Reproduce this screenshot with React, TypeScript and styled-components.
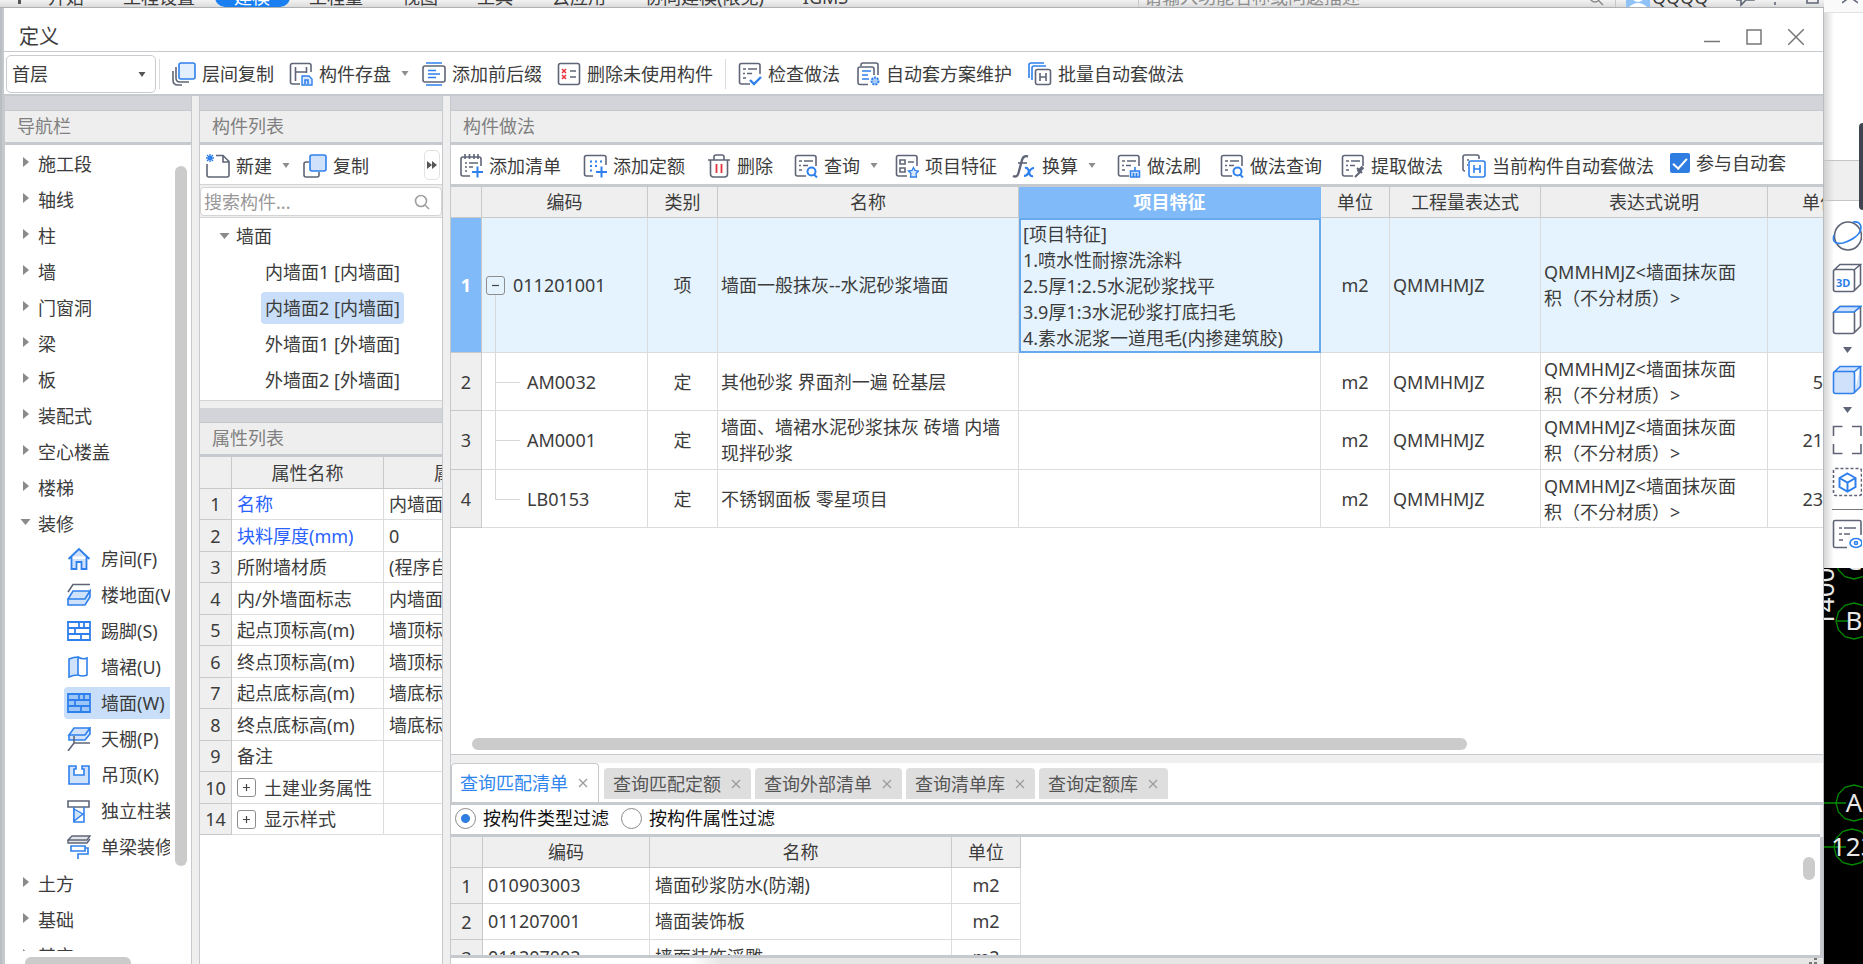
import React from "react";
import styled, { createGlobalStyle, css } from "styled-components";

const ink = "#3c3c3c";
const line = "#d4d4d4";
const strong = "#c6cace";
const gray = "#5f6577";
const blue = "#2f80ed";
const pale = "#cfe1fb";

const Global = createGlobalStyle`
  * { box-sizing: border-box; }
  body { margin: 0; overflow: hidden; background: #fff; }
  body, button, input, select, table {
    font: 18px/26px "Noto Sans", "Noto Sans CJK SC", sans-serif;
    color: ${ink};
  }
  button { border: 0; padding: 0; background: none; white-space: nowrap; }
  ul { list-style: none; margin: 0; padding: 0; }
`;

/* ---------- icons ---------- */

const g = { stroke: gray, strokeWidth: 1.6, fill: "none" };
const b = { stroke: blue, strokeWidth: 1.6, fill: "none" };
const sheet = <path {...g} d="M22 12V3.5Q22 1.5 20 1.5H3.500Q1.500 1.500 1.500 3.500V20Q1.500 22 3.500 22H12" />;
const rows = <path {...g} d="M5 7h3M10 7h9M5 11.500h2M9 11.500h5M5 16h3" />;

const icons: Record<string, React.ReactNode> = {
  layers: <>
    <path {...g} d="M4 5v11q0 4 4 4h9M1 9v9q0 5 5 5h4" />
    <rect x="7" y="1" width="16" height="16" rx="2" fill="#e4effd" stroke={blue} strokeWidth="1.6" />
  </>,
  save: <>
    <path {...g} d="M22 10V3.500Q22 1.500 20 1.500H3.500Q1.500 1.500 1.500 3.500V20Q1.500 22 3.500 22H11" />
    <path {...g} d="M6.500 5v14M6.500 10h11M17.500 5v6" />
    <path d="M13 14h7l3 3v6H13z" fill="#d9e8fd" stroke={blue} strokeWidth="1.4" />
    <path {...b} d="M16 22v-4h3v4" />
  </>,
  affix: <>
    <path {...b} d="M4 1h16M4 23h16" />
    <rect {...g} x="1" y="4" width="22" height="16" rx="2" />
    <path {...b} d="M6 8.500h8M6 12h12M6 15.500h8" />
  </>,
  unused: <>
    <rect {...g} x="1.500" y="1.500" width="21" height="21" rx="2" />
    <path stroke="#e5323c" strokeWidth="1.5" d="M5 7l4 4M9 7l-4 4M5 13l4 4M9 13l-4 4" />
    <path {...g} d="M13 9h6M13 15h6" />
  </>,
  check: <>{sheet}{rows}<path {...b} strokeWidth="2.4" d="M12 18l4 4 7-7" /></>,
  scheme: <>
    <path {...g} d="M5 4V3q0-2 2-2h13q2 0 2 2v10M12 22.500H4q-2 0-2-2V7q0-2 2-2h12q2 0 2 2v6" />
    <path {...b} d="M6 9h9M6 13h6M6 17h7" />
    <circle cx="19" cy="19" r="3.500" fill="#a9cbf8" stroke={blue} strokeWidth="2" strokeDasharray="2 1" />
  </>,
  batch: <>
    <path {...b} d="M1 16V3q0-2 2-2h13M4 18V6q0-2 2-2h12" />
    <rect {...g} x="7.500" y="7.500" width="15" height="15" rx="2" />
    <path {...g} d="M12 11v8M18 11v8M12 15h6" />
  </>,
  create: <>
    <path {...g} d="M10 1.500h7l6 6V21q0 2-2 2H3q-2 0-2-2V10M17 1.500V8h6" />
    <path stroke={blue} strokeWidth="1.4" d="M1 1l6 6M7 1L1 7M4 0v8M0 4h8" />
  </>,
  copy: <>
    <path {...g} d="M6 8H3q-2 0-2 2v11q0 2 2 2h11q2 0 2-2v-3" />
    <rect x="7" y="1" width="16" height="16" rx="2" fill={pale} stroke={blue} strokeWidth="1.6" />
  </>,
  addList: <>
    <path {...g} d="M22 12V5q0-2-2-2H4Q2 3 2 5v15q0 2 2 2h7M6 0v5M10.500 0v5M15 0v5M19 0v5M6 9h2M10 9h9M6 13h2M10 13h4M6 17h2" />
    <path {...b} strokeWidth="2" d="M13 18h11M18.500 12.500v11" />
  </>,
  addQuota: <>
    <path {...g} d="M23 11V3.500q0-2-2-2H3.500q-2 0-2 2V20q0 2 2 2H10" />
    <path stroke={blue} strokeWidth="2" strokeDasharray="2 3" d="M7 7.500h12M7 12h7M7 16.500h4" />
    <path {...b} strokeWidth="2" d="M13 18h11M18.500 12.500v11" />
  </>,
  trash: <>
    <path {...g} d="M1 6h22M7 6V3q0-2 2-2h6q2 0 2 2v3M3.500 6v14q0 3 3 3h11q3 0 3-3V6" />
    <path stroke="#e5323c" strokeWidth="1.8" d="M9.500 10v9M14.500 10v9" />
  </>,
  query: <>{sheet}{rows}<circle {...b} strokeWidth="2" cx="17.500" cy="17.500" r="4" /><path {...b} strokeWidth="2" d="M20 20.500l3 3" /></>,
  feature: <>
    {sheet}
    <path {...g} d="M5 6h5v4H5zM5 14h5v4H5zM13 8h6" />
    <path d="M18.500 13.500l1.500 3 3.500.5-2.500 2.500.5 3.500h-6l.5-3.500L13.500 17l3.500-.5z" fill="#d9e8fd" stroke={blue} strokeWidth="1.300" />
  </>,
  fx: <>
    <path d="M1 22q4 2 5.500-3L10 6q1.500-5 6-3.500" fill="none" stroke={gray} strokeWidth="2.4" />
    <path {...g} d="M6 9h9" />
    <path stroke={blue} strokeWidth="2.2" fill="none" d="M13 14q3-1 4 4t4 4M22 14q-3 0-5 4t-5 4" />
  </>,
  brush: <>{sheet}{rows}<path d="M13.500 17h9v6h-9z" fill={pale} stroke={blue} strokeWidth="1.5" /><path {...b} d="M18 13v4M16.500 19v4M19.500 19v4" /></>,
  extract: <>{sheet}{rows}<path stroke={gray} strokeWidth="3.500" d="M17 18l5-5" /><path stroke={gray} strokeWidth="2" d="M14 23l5-5M16 14l5 5" /></>,
  current: <>
    <path {...g} d="M17 5V3q0-2-2-2H3Q1 1 1 3v12q0 2 2 2M5 6h2M5 11h1" />
    <rect {...b} x="7" y="7" width="16" height="16" rx="2" />
    <path {...b} d="M12 11v8M18 11v8M12 15h6" />
  </>,
  house: <path d="M1.500 12L12 2l10.500 10M4.500 9.500V22h5v-7h5v7h5V9.500" fill={pale} stroke={blue} strokeWidth="1.8" />,
  floor: <>
    <path {...g} d="M1 9l5-7.500h17" />
    <path d="M1 16l5-8h17l-5 8zM1 16v6h17l5-8V8l-5 8z" fill={pale} stroke={blue} strokeWidth="1.600" />
  </>,
  brick: <path {...b} strokeWidth="1.8" d="M1 3h22v18H1zM1 9h22M1 15h22M12 3v6M17 3v6M8 9v6M14 15v6" />,
  brickOn: <><path d="M1 3h22v18H1z" fill="#9cc5f8" stroke={blue} strokeWidth="1.8" /><path {...b} strokeWidth="1.8" d="M1 9h22M1 15h22M12 3v6M17 3v6M8 9v6M14 15v6" /></>,
  dado: <>
    <path d="M2 4q5-2 9-2v18q-5 0-9 2z" fill={pale} stroke={blue} strokeWidth="1.6" />
    <path {...b} d="M11 2q5 3 9 1v17q-4 2-9 0" />
  </>,
  ceiling: <>
    <path d="M2 8l5-7h16l-5 7zM2 8v5h16l5-6V1l-5 7z" fill={pale} stroke={blue} strokeWidth="1.6" />
    <path {...g} d="M1 24l6-8h16M7 16V9" />
  </>,
  drop: <path d="M2 3h7v3H7v6h10V6h-2V3h7v18H2z" fill={pale} stroke={blue} strokeWidth="1.6" />,
  column: <>
    <path {...g} d="M1 2h21v6H1z" />
    <path {...b} d="M7 8v15h10V8" /><path d="M7 10l9 5-9 7z" fill={pale} stroke={blue} strokeWidth="1.4" />
  </>,
  beam: <>
    <path d="M1 5l4-4h18l-3 4zM1 5v3h19l3-4" fill="#e4e5ea" stroke={gray} strokeWidth="1.4" />
    <path {...b} d="M4 11h14v5H4zM18 13h3v6H11v5" />
  </>,
};

const Icon = ({ name }: { name: string }) => (
  <svg width="24" height="24" viewBox="0 0 24 24" aria-hidden="true">{icons[name]}</svg>
);

/* ---------- shell ---------- */

const Page = styled.div`
  display: flex;
  height: 100vh;
  overflow: hidden;
  background: #b9bec4;
`;
const Left = styled.div`
  flex: 1;
  min-width: 0;
  display: flex;
  flex-direction: column;
`;
const Ribbon = styled.div`
  flex: none;
  display: flex;
  align-items: flex-end;
  height: 8px;
  overflow: hidden;
  padding-left: 8px;
  background: linear-gradient(#f2f2f2, #dcdcdc);
  border-bottom: 1px solid #aeb0b2;
`;
const RibbonTab = styled.button<{ $on?: boolean }>`
  flex: none;
  height: 20px;
  padding: 0 20px 0 19px;
  line-height: 20px;
  ${(p) => p.$on && css`background: #1a7ff0; color: #fff; border-radius: 10px;`}
`;
const RibbonMark = styled.span`
  flex: none;
  width: 21px;
  height: 4px;
  margin-bottom: 3px;
  &::before { content: ""; display: block; width: 10px; height: 4px; border-right: 3px solid #555; }
`;
const RibbonSearch = styled.label`
  display: flex;
  align-items: flex-end;
  width: 478px;
  height: 20px;
  margin-left: auto;
  border-left: 1px solid #c8c8c8;
  border-right: 1px solid #c8c8c8;
  padding: 0 11px 0 5px;
  input { flex: 1; height: 20px; border: 0; padding: 0; background: none; line-height: 20px; }
  input::placeholder { color: #8f8f8f; opacity: 1; }
`;
const Account = styled.div`
  display: flex;
  align-items: flex-end;
  width: 208px;
  padding-left: 10px;
  span { padding: 0 26px 0 2px; line-height: 20px; }
  svg { flex: none; }
`;

const Window = styled.main`
  flex: 1;
  min-height: 0;
  display: flex;
  flex-direction: column;
  margin-left: 2px;
  border-left: 2px solid #c6c9cc;
  border-right: 1px solid #b8bcc0;
  background: #fff;
`;
const TitleBar = styled.header`
  flex: none;
  display: flex;
  align-items: center;
  height: 44px;
  padding: 14px 19px 0 15px;
  border-bottom: 1px solid ${strong};
  h1 { flex: 1; margin: 0; font-size: 20px; font-weight: 400; line-height: 28px; }
`;
const Controls = styled.div`
  display: flex;
  gap: 26px;
  button { display: block; height: 16px; }
  svg { display: block; }
`;
const TopBar = styled.div`
  flex: none;
  display: flex;
  align-items: center;
  height: 44px;
  padding: 1px 0 0 2px;
  border-bottom: 2px solid ${strong};
`;
const FloorSelect = styled.label`
  position: relative;
  flex: none;
  width: 150px;
  height: 38px;
  select {
    width: 100%;
    height: 100%;
    appearance: none;
    padding: 0 5px;
    border: 1px solid #c9cbce;
    border-radius: 5px;
    background: #fff;
  }
  svg { position: absolute; right: 8px; top: 16px; }
`;
const Rule = styled.span<{ $before?: number }>`
  flex: none;
  width: 1px;
  height: 30px;
  margin: 0 12px 0 ${(p) => p.$before ?? 12}px;
  background: #dcdcdc;
`;
const Group = styled.div<{ $gap: number; $loose?: boolean }>`
  flex: none;
  display: flex;
  align-items: center;
  gap: ${(p) => p.$gap}px;
  ${(p) => p.$loose && css`&& span + svg { margin-right: 0; }`}
`;
const Tool = styled.button`
  display: flex;
  align-items: center;
  height: 30px;
  line-height: 30px;
  svg { flex: none; }
  svg:first-child { margin-right: 6px; }
  span + svg { margin: 0 -4px 0 8px; }
`;
const Rest = styled.div`
  flex: none;
  display: flex;
  gap: 19px;
  margin-left: 21px;
`;
const Caret = ({ color = "#8d8d8d" }: { color?: string }) => (
  <svg width="12" height="8" viewBox="0 0 12 8" aria-hidden="true"><path d="M2.500 1h7L6 6z" fill={color} /></svg>
);
const ToolButton = ({ icon, label, menu }: { icon: string; label: string; menu?: boolean }) => (
  <Tool type="button"><Icon name={icon} /><span>{label}</span>{menu && <Caret />}</Tool>
);

const Work = styled.div`
  flex: 1;
  min-height: 0;
  display: grid;
  grid-template-columns: 188px 244px minmax(0, 1fr);
  column-gap: 7px;
  background: #efefef;
`;
const Column = styled.section`
  min-width: 0;
  min-height: 0;
  display: flex;
  flex-direction: column;
  border: solid ${strong};
  border-width: 0 1px;
`;
const PanelTitle = styled.h2`
  flex: none;
  margin: 0;
  height: 49px;
  padding-left: 12px;
  border-top: 14px solid #d2d4da;
  border-bottom: 3px solid ${strong};
  background: #eee;
  color: #808080;
  font-size: 18px;
  font-weight: 400;
  line-height: 32px;
  box-shadow: inset 0 1px #c4c8cc;
`;

/* ---------- navigation ---------- */

const NavBody = styled.div`
  flex: 1;
  min-height: 0;
  display: flex;
  padding-right: 4px;
  gap: 5px;
  overflow: hidden;
  background: #fff;
`;
const NavTree = styled.ul`
  flex: 1;
  min-width: 0;
  overflow: hidden;
`;
const NavGroup = styled.button`
  display: flex;
  align-items: center;
  height: 36px;
  padding: 2px 0 0 14px;
  gap: 5px;
  svg { margin-bottom: 4px; }
`;
const NavItem = styled.button<{ $on?: boolean }>`
  display: flex;
  align-items: center;
  width: 100%;
  height: 32px;
  padding-left: 3px;
  gap: 10px;
  border-radius: 4px 0 0 4px;
  background: ${(p) => (p.$on ? "#c9dff9" : "none")};
  overflow: hidden;
  svg { flex: none; }
`;
const NavLeaf = styled.li`
  display: flex;
  align-items: center;
  padding-left: 59px;
  height: 36px;
`;
const VTrack = styled.div<{ $top: number; $bottom: number }>`
  flex: none;
  display: flex;
  width: 12px;
  padding: ${(p) => p.$top}px 0 ${(p) => p.$bottom}px;
  &::before { content: ""; flex: 1; border-radius: 6px; background: #cbcbcb; }
`;
const NavFoot = styled.div`
  flex: none;
  height: 13px;
  padding: 6px 0 0 20px;
  overflow: hidden;
  background: #fff;
  &::before { content: ""; display: block; width: 106px; height: 12px; border-radius: 6px; background: #cbcbcb; }
`;
const Fold = ({ open }: { open?: boolean }) => (
  <svg width="14" height="12" viewBox="0 0 14 12" aria-hidden="true">
    <path d={open ? "M1.500 3h10L6.500 9z" : "M4 1l6 5-6 5z"} fill="#8a8a8a" />
  </svg>
);

/* ---------- component list ---------- */

const ListTools = styled.div`
  flex: none;
  display: flex;
  align-items: center;
  gap: 15px;
  height: 40px;
  padding: 3px 2px 0 6px;
  border-bottom: 1px solid ${line};
  background: #fff;
`;
const More = styled.button`
  width: 16px;
  height: 30px;
  margin: 0 0 2px auto;
  border: 1px solid #e2e2e2;
  border-radius: 5px;
  svg { display: block; margin: auto; }
`;
const Search = styled.label`
  flex: none;
  display: flex;
  align-items: center;
  height: 29px;
  margin: 2px 0 1px;
  padding: 0 11px 0 3px;
  border: 1px solid ${line};
  border-radius: 4px;
  background: #fff;
  input { flex: 1; min-width: 0; border: 0; padding: 0; background: none; outline: 0; }
  input::placeholder { color: #989898; opacity: 1; }
`;
const Tree = styled.ul`
  flex: none;
  height: 184px;
  margin-bottom: 7px;
  border: 1px solid ${line};
  border-width: 1px 0;
  background: #fff;
  li { display: flex; align-items: center; height: 36px; }
`;
const TreeRoot = styled.button`
  display: flex;
  align-items: center;
  gap: 4px;
  padding-left: 18px;
`;
const TreeItem = styled.button<{ $on?: boolean }>`
  height: 32px;
  margin-left: 61px;
  padding: 0 4px;
  line-height: 32px;
  border-radius: 4px;
  background: ${(p) => (p.$on ? "#c9dff9" : "none")};
`;

/* ---------- tables ---------- */

const Grid = styled.table`
  flex: none;
  width: 100%;
  table-layout: fixed;
  border-collapse: separate;
  border-spacing: 0;
  background: #fff;
  th { background: #efefef; font-weight: 400; padding: 0; border: solid #c9c9c9; border-width: 0 1px 1px 0; text-align: center; }
  td { padding: 0 6px 0 3px; border: solid #dcdcdc; border-width: 0 1px 1px 0; }
  th, td { overflow: hidden; }
`;
const PropGrid = styled(Grid)`
  white-space: nowrap;
  thead th { height: 32px; }
  tbody th, tbody td { height: 31px; line-height: 26px; }
  tbody tr:nth-child(even) > * { height: 32px; }
  td { padding: 0 0 0 5px; }
  tr > :last-child { border-right: 0; }
`;
const PropValueHead = styled.th`
  && { padding-left: 50px; text-align: left; }
`;
const PropName = styled.td<{ $accent?: boolean }>`
  color: ${(p) => (p.$accent ? "#2962ff" : ink)};
`;
const Blank = styled.div`
  flex: 1;
  min-height: 0;
  background: #fff;
`;
const Labelled = styled.span<{ $gap: number }>`
  display: flex;
  align-items: center;
  gap: ${(p) => p.$gap}px;
`;
const Toggle = styled.button`
  flex: none;
  display: flex;
  align-items: center;
  justify-content: center;
  width: 19px;
  height: 19px;
  border: 1px solid #8d8d8d;
  border-radius: 3px;
`;
const Sign = ({ plus }: { plus?: boolean }) => (
  <svg width="9" height="9" viewBox="0 0 9 9" aria-hidden="true">
    <path d={plus ? "M1 4.500h7M4.500 1v7" : "M1 4.500h7"} stroke="#444" strokeWidth="1.2" />
  </svg>
);

const Main = styled(Column)`
  border-right: 0;
`;
const MainTools = styled.div`
  flex: none;
  display: flex;
  align-items: center;
  height: 42px;
  padding: 3px 0 0 8px;
  border-bottom: 3px solid ${strong};
  background: #fff;
  overflow: hidden;
`;
const Join = styled.label`
  flex: none;
  display: flex;
  align-items: center;
  gap: 6px;
  margin: 0 0 6px 16px;
  input {
    appearance: none;
    width: 20px;
    height: 20px;
    margin: 0;
    border-radius: 2px;
    background: #2f7de1;
    display: grid;
    place-items: center;
  }
  input::before { content: ""; width: 6px; height: 12px; margin-bottom: 3px; border: solid #fff; border-width: 0 2px 2px 0; rotate: 42deg; }
`;
const BillGrid = styled(Grid)`
  thead th { height: 31px; }
  thead th:nth-child(5) { background: #80baf9; color: #fff; font-weight: 700; border-color: #80baf9; }
  thead th:last-child { padding-left: 34px; text-align: left; white-space: nowrap; }
  tr > :last-child { border-right: 0; padding-right: 0; }
`;
const BillRow = styled.tr<{ $on?: boolean }>`
  > * { height: ${(p) => (p.$on ? 135 : 58)}px; }
  &:nth-child(3) > * { height: 59px; }
  > td:nth-child(3), > td:nth-child(6) { text-align: center; padding: 0; }
  > td:nth-child(8) { padding-right: 14px; }
  > td:last-child { text-align: right; }
  ${(p) => p.$on && css`
    td { background: #e5f3fe; }
    th { background: #80baf9; color: #fff; font-weight: 700; }
    td:nth-child(5) { border: 2px solid #68a9ee; padding-left: 2px; white-space: pre-line; }
  `}
`;
const CodeCell = styled.td<{ $kind: "root" | "mid" | "last" }>`
  position: relative;
  &&& { padding-left: ${(p) => (p.$kind === "root" ? 4 : 45)}px; }
  &::before {
    content: "";
    position: absolute;
    left: 13px;
    top: ${(p) => (p.$kind === "root" ? "calc(50% + 10px)" : "0")};
    bottom: ${(p) => (p.$kind === "last" ? "50%" : "0")};
    border-left: 1px solid #d8d8d8;
  }
  &::after {
    content: "";
    position: absolute;
    left: 13px;
    top: 50%;
    width: ${(p) => (p.$kind === "root" ? 0 : 25)}px;
    border-top: 1px solid #d8d8d8;
  }
`;
const HTrack = styled.div`
  flex: none;
  height: 17px;
  padding: 0 356px 5px 21px;
  border-bottom: 1px solid ${strong};
  background: #fff;
  &::before { content: ""; display: block; height: 12px; border-radius: 6px; background: #cbcbcb; }
`;

/* ---------- lower query panel ---------- */

const Tabs = styled.div`
  flex: none;
  display: flex;
  align-items: flex-end;
  gap: 4px;
  height: 50px;
  padding-bottom: 3px;
  border-top: 8px solid #efefef;
  border-bottom: 3px solid ${strong};
  background: #fff;
`;
const Tab = styled.div<{ $on?: boolean }>`
  display: flex;
  align-items: center;
  gap: 9px;
  height: 31px;
  padding: 0 9px;
  border-radius: 4px 4px 0 0;
  background: #dedede;
  color: #555;
  button { line-height: 30px; color: inherit; }
  button + button { display: flex; }
  ${(p) => p.$on && css`
    height: 39px;
    margin: 0 1px -3px 0;
    padding: 0 9px 0 8px;
    border: 1px solid ${strong};
    border-bottom: 0;
    background: #fff;
    color: #2f86ee;
  `}
`;
const Filters = styled.fieldset`
  flex: none;
  display: flex;
  align-items: center;
  gap: 12px;
  height: 32px;
  margin: 0 3px 0 0;
  padding: 0 4px;
  border: 0;
  border-bottom: 3px solid ${strong};
  background: #fff;
  color: #111;
  label { display: flex; align-items: center; gap: 7px; }
  input {
    appearance: none;
    width: 21px;
    height: 21px;
    margin: 0;
    border: 1px solid #8a8a8a;
    border-radius: 50%;
    background: #fff;
  }
  input:checked { background: radial-gradient(circle, #2f7de1 4px, #fff 5px); }
`;
const Results = styled.div`
  flex: none;
  display: flex;
  justify-content: space-between;
  height: 121px;
  padding-right: 5px;
  border-right: 3px solid ${strong};
  border-bottom: 3px solid ${strong};
  overflow: hidden;
  background: #fff;
`;
const ResultGrid = styled(Grid)`
  width: 570px;
  height: 0;
  thead th { height: 31px; }
  tbody > tr > * { height: 36px; }
  tbody > tr > td { padding: 0 0 2px 5px; }
  tbody > tr > td:last-child { text-align: center; padding-left: 0; }
`;
const Status = styled.footer`
  flex: none;
  display: flex;
  justify-content: flex-end;
  height: 6px;
  padding: 0 5px;
  background: linear-gradient(90deg, #fff 240px, #e6e6e6 270px);
`;

/* ---------- right edge ---------- */

const Side = styled.aside`
  position: relative;
  flex: none;
  display: flex;
  flex-direction: column;
  width: 39px;
  overflow: hidden;
  background: #000;
`;
const SideTop = styled.div`
  flex: none;
  height: 13px;
  padding-left: 18px;
  overflow: hidden;
  background: #fafafa;
  border-bottom: 1px solid #e2e2e2;
  svg { display: block; }
`;
const SideBlank = styled.div`
  flex: none;
  height: 148px;
  background: linear-gradient(90deg, #d6d6d6, #fff 10px);
  border-bottom: 1px solid #c4c4c4;
`;
const SideBand = styled.div`
  flex: none;
  height: 40px;
  background: linear-gradient(90deg, #cfcfcf, #efefef 10px);
  border-bottom: 1px solid #c4c4c4;
`;
const SideHandle = styled.span`
  position: absolute;
  right: 0;
  top: 123px;
  width: 4px;
  height: 87px;
  border-radius: 4px 0 0 4px;
  background: #3f444f;
`;
const SideTools = styled.div`
  flex: none;
  display: flex;
  flex-direction: column;
  align-items: flex-start;
  gap: 12px;
  padding: 20px 0 19px 8px;
  background: linear-gradient(90deg, #d6d6d6, #fff 10px);
  button, svg { display: block; }
`;
const SideView = styled.div`
  align-self: stretch;
  padding-top: 9px;
  border-top: 1px solid #777;
`;
const sideTool = (label: string, body: React.ReactNode) => (
  <button type="button" aria-label={label}>
    <svg width="30" height="30" viewBox="0 0 30 30" fill="none" stroke={gray} strokeWidth="1.6">{body}</svg>
  </button>
);
const cube = "M1.500 8.500q0-2 2-2h17q2 0 2 2v18q0 2-2 2h-17q-2 0-2-2z M2 7l6-5.500h20.500L22 7 M28.500 1.500v20l-6 6";
const ring = (cx: number, cy: number) =>
  Array.from({ length: 12 }, (_, i) => {
    const a = (i * Math.PI) / 6;
    return `${(cx + 18 * Math.cos(a)).toFixed(1)},${(cy + 18 * Math.sin(a)).toFixed(1)}`;
  }).join(" ");

/* ---------- data ---------- */

const navTop = ["施工段", "轴线", "柱", "墙", "门窗洞", "梁", "板", "装配式", "空心楼盖", "楼梯"];
const navLeaves: [string, string][] = [
  ["house", "房间(F)"], ["floor", "楼地面(V)"], ["brick", "踢脚(S)"], ["dado", "墙裙(U)"],
  ["brickOn", "墙面(W)"], ["ceiling", "天棚(P)"], ["drop", "吊顶(K)"], ["column", "独立柱装修"], ["beam", "单梁装修"],
];
const navEnd = ["土方", "基础", "其它"];
const walls = ["内墙面1 [内墙面]", "内墙面2 [内墙面]", "外墙面1 [外墙面]", "外墙面2 [外墙面]"];
const props: { n: number; name: string; value?: string; accent?: boolean; fold?: boolean }[] = [
  { n: 1, name: "名称", value: "内墙面2", accent: true },
  { n: 2, name: "块料厚度(mm)", value: "0", accent: true },
  { n: 3, name: "所附墙材质", value: "(程序自动判断)" },
  { n: 4, name: "内/外墙面标志", value: "内墙面" },
  { n: 5, name: "起点顶标高(m)", value: "墙顶标高" },
  { n: 6, name: "终点顶标高(m)", value: "墙顶标高" },
  { n: 7, name: "起点底标高(m)", value: "墙底标高" },
  { n: 8, name: "终点底标高(m)", value: "墙底标高" },
  { n: 9, name: "备注" },
  { n: 10, name: "土建业务属性", fold: true },
  { n: 14, name: "显示样式", fold: true },
];
const feature = "[项目特征]\n1.喷水性耐擦洗涂料\n2.5厚1:2.5水泥砂浆找平\n3.9厚1:3水泥砂浆打底扫毛\n4.素水泥浆一道甩毛(内掺建筑胶)";
const bills: { code: string; kind: "root" | "mid" | "last"; type: string; name: string; price: string }[] = [
  { code: "011201001", kind: "root", type: "项", name: "墙面一般抹灰--水泥砂浆墙面", price: "" },
  { code: "AM0032", kind: "mid", type: "定", name: "其他砂浆 界面剂一遍 砼基层", price: "5" },
  { code: "AM0001", kind: "mid", type: "定", name: "墙面、墙裙水泥砂浆抹灰 砖墙 内墙 现拌砂浆", price: "21" },
  { code: "LB0153", kind: "last", type: "定", name: "不锈钢面板 零星项目", price: "23" },
];
const tabs = ["查询匹配清单", "查询匹配定额", "查询外部清单", "查询清单库", "查询定额库"];
const results = [["010903003", "墙面砂浆防水(防潮)"], ["011207001", "墙面装饰板"], ["011207002", "墙面装饰浮雕"]];

export default function App() {
  return (
    <Page>
      <Global />
      <Left>
        <Ribbon>
          <RibbonMark />
          {["开始", "工程设置", "建模", "工程量", "视图", "工具", "云应用", "协同建模(限免)", "IGMS"].map((t) => (
            <RibbonTab key={t} type="button" $on={t === "建模"}>{t}</RibbonTab>
          ))}
          <RibbonSearch>
            <input aria-label="搜索功能" placeholder="请输入功能名称或问题描述" />
            <svg width="16" height="16" viewBox="0 0 16 16" fill="none" stroke="#888" strokeWidth="1.5"><circle cx="7" cy="6" r="5" /><path d="M11 10l4 4" /></svg>
          </RibbonSearch>
          <Account>
            <svg width="24" height="24" viewBox="0 0 24 24"><rect width="24" height="24" fill="#8fc2f7" /><circle cx="12" cy="13" r="6" fill="#fff" /><path d="M3 24q9-8 18 0z" fill="#fff" /></svg>
            <span>QQQQ</span>
            <svg width="90" height="20" viewBox="0 0 90 20" fill="none" stroke={gray} strokeWidth="1.6">
              <path d="M3 2v11h4v5l5-5h8V2M41 15v3M73 2v14h11V2" />
            </svg>
          </Account>
        </Ribbon>
        <Window>
          <TitleBar>
            <h1>定义</h1>
            <Controls>
              <button type="button" aria-label="最小化"><svg width="16" height="16" stroke="#777" strokeWidth="1.5"><path d="M0 12.500h16" /></svg></button>
              <button type="button" aria-label="最大化"><svg width="16" height="16" stroke="#777" strokeWidth="1.5" fill="none"><rect x="1" y="1" width="14" height="14" /></svg></button>
              <button type="button" aria-label="关闭"><svg width="16" height="16" stroke="#777" strokeWidth="1.5"><path d="M0 0l16 16M16 0L0 16" /></svg></button>
            </Controls>
          </TitleBar>
          <TopBar>
            <FloorSelect>
              <select aria-label="楼层" defaultValue="首层"><option>首层</option></select>
              <Caret color="#555" />
            </FloorSelect>
            <Rule $before={3} />
            <Group $gap={15}>
              <ToolButton icon="layers" label="层间复制" />
              <ToolButton icon="save" label="构件存盘" menu />
              <ToolButton icon="affix" label="添加前后缀" />
              <ToolButton icon="unused" label="删除未使用构件" />
            </Group>
            <Rule />
            <Group $gap={16}>
              <ToolButton icon="check" label="检查做法" />
              <ToolButton icon="scheme" label="自动套方案维护" />
              <ToolButton icon="batch" label="批量自动套做法" />
            </Group>
          </TopBar>
          <Work>
            <Column>
              <PanelTitle>导航栏</PanelTitle>
              <NavBody>
                <NavTree>
                  {navTop.map((t) => <li key={t}><NavGroup type="button"><Fold />{t}</NavGroup></li>)}
                  <li><NavGroup type="button"><Fold open />装修</NavGroup></li>
                  {navLeaves.map(([icon, t]) => (
                    <NavLeaf key={t}><NavItem type="button" $on={icon === "brickOn"}><Icon name={icon} />{t}</NavItem></NavLeaf>
                  ))}
                  {navEnd.map((t) => <li key={t}><NavGroup type="button"><Fold />{t}</NavGroup></li>)}
                </NavTree>
                <VTrack $top={21} $bottom={85} />
              </NavBody>
              <NavFoot />
            </Column>
            <Column>
              <PanelTitle>构件列表</PanelTitle>
              <ListTools>
                <ToolButton icon="create" label="新建" menu />
                <ToolButton icon="copy" label="复制" />
                <More type="button" aria-label="更多"><svg width="12" height="10" viewBox="0 0 12 10" fill="#555"><path d="M1 1l5 4-5 4zM6 1l5 4-5 4z" /></svg></More>
              </ListTools>
              <Search>
                <input aria-label="搜索构件" placeholder="搜索构件..." />
                <svg width="16" height="16" viewBox="0 0 16 16" fill="none" stroke="#a0a0a0" strokeWidth="1.6"><circle cx="7" cy="7" r="5.500" /><path d="M11 11l4 4" /></svg>
              </Search>
              <Tree>
                <li><TreeRoot type="button"><Fold open />墙面</TreeRoot></li>
                {walls.map((w, i) => <li key={w}><TreeItem type="button" $on={i === 1}>{w}</TreeItem></li>)}
              </Tree>
              <PanelTitle>属性列表</PanelTitle>
              <PropGrid>
                <colgroup><col width="32" /><col width="152" /><col /></colgroup>
                <thead><tr><th /><th>属性名称</th><PropValueHead>属性值</PropValueHead></tr></thead>
                <tbody>
                  {props.map((p) => (
                    <tr key={p.n}>
                      <th>{p.n}</th>
                      <PropName $accent={p.accent}>
                        {p.fold
                          ? <Labelled $gap={8}><Toggle type="button" aria-label="展开"><Sign plus /></Toggle>{p.name}</Labelled>
                          : p.name}
                      </PropName>
                      <td>{p.value}</td>
                    </tr>
                  ))}
                </tbody>
              </PropGrid>
              <Blank />
            </Column>
            <Main>
              <PanelTitle>构件做法</PanelTitle>
              <MainTools>
                <Group $gap={22}>
                  <ToolButton icon="addList" label="添加清单" />
                  <ToolButton icon="addQuota" label="添加定额" />
                  <ToolButton icon="trash" label="删除" />
                </Group>
                <Rest>
                  <Group $gap={15} $loose>
                    <ToolButton icon="query" label="查询" menu />
                    <ToolButton icon="feature" label="项目特征" />
                    <ToolButton icon="fx" label="换算" menu />
                  </Group>
                  <Group $gap={19}>
                    <ToolButton icon="brush" label="做法刷" />
                    <ToolButton icon="query" label="做法查询" />
                    <ToolButton icon="extract" label="提取做法" />
                    <ToolButton icon="current" label="当前构件自动套做法" />
                  </Group>
                </Rest>
                <Join><input type="checkbox" defaultChecked />参与自动套</Join>
              </MainTools>
              <BillGrid>
                <colgroup>
                  <col width="31" /><col width="166" /><col width="70" /><col width="301" /><col width="302" />
                  <col width="69" /><col width="151" /><col width="227" /><col />
                </colgroup>
                <thead>
                  <tr><th /><th>编码</th><th>类别</th><th>名称</th><th>项目特征</th><th>单位</th><th>工程量表达式</th><th>表达式说明</th><th>单价</th></tr>
                </thead>
                <tbody>
                  {bills.map((r, i) => (
                    <BillRow key={r.code} $on={i === 0}>
                      <th>{i + 1}</th>
                      <CodeCell $kind={r.kind}>
                        {r.kind === "root"
                          ? <Labelled $gap={8}><Toggle type="button" aria-label="折叠"><Sign /></Toggle>{r.code}</Labelled>
                          : r.code}
                      </CodeCell>
                      <td>{r.type}</td>
                      <td>{r.name}</td>
                      <td>{i === 0 ? feature : ""}</td>
                      <td>m2</td>
                      <td>QMMHMJZ</td>
                      <td>QMMHMJZ&lt;墙面抹灰面积（不分材质）&gt;</td>
                      <td>{r.price}</td>
                    </BillRow>
                  ))}
                </tbody>
              </BillGrid>
              <Blank />
              <HTrack />
              <Tabs>
                {tabs.map((t, i) => (
                  <Tab key={t} $on={i === 0}>
                    <button type="button">{t}</button>
                    <button type="button" aria-label={`关闭${t}`}>
                      <svg width="12" height="12" viewBox="0 0 12 12" stroke="#9a9a9a" strokeWidth="1.2"><path d="M2 2l8 8M10 2l-8 8" /></svg>
                    </button>
                  </Tab>
                ))}
              </Tabs>
              <Filters>
                <label><input type="radio" name="filter" defaultChecked />按构件类型过滤</label>
                <label><input type="radio" name="filter" />按构件属性过滤</label>
              </Filters>
              <Results>
                <ResultGrid>
                  <colgroup><col width="32" /><col width="167" /><col width="302" /><col width="69" /></colgroup>
                  <thead><tr><th /><th>编码</th><th>名称</th><th>单位</th></tr></thead>
                  <tbody>
                    {results.map(([code, name], i) => <tr key={code}><th>{i + 1}</th><td>{code}</td><td>{name}</td><td>m2</td></tr>)}
                  </tbody>
                </ResultGrid>
                <VTrack $top={20} $bottom={75} />
              </Results>
              <Status>
                <svg width="9" height="6" viewBox="0 0 9 6" fill="#777"><path d="M5 0h3v2H5zM0 4h3v2H0zM5 4h3v2H5z" /></svg>
              </Status>
            </Main>
          </Work>
        </Window>
      </Left>
      <Side>
        <SideTop><svg width="16" height="4" viewBox="0 0 16 4" fill="none" stroke={gray} strokeWidth="1.5"><path d="M0 3l8-6 8 6" /></svg></SideTop>
        <SideBlank />
        <SideBand />
        <SideHandle />
        <SideTools>
          {sideTool("动态观察", <><ellipse cx="16" cy="15" rx="13.500" ry="14" /><path stroke={blue} d="M2 14q-3 10 9 8 18-6 18-16-1-6-8-5" /></>)}
          {sideTool("三维", <><path d={cube} /><text x="4" y="24" fontSize="11" fontWeight="700" fill={blue} stroke="none">3D</text></>)}
          {sideTool("俯视", <><path d={cube} /><path d="M2 7l6-5.500h20.500L22 7z" fill={pale} stroke={blue} /></>)}
          <svg width="28" height="6" viewBox="0 0 28 6"><path d="M11 0h9l-4.500 6z" fill={gray} /></svg>
          {sideTool("实体", <path d={cube} fill={pale} stroke={blue} />)}
          <svg width="28" height="6" viewBox="0 0 28 6"><path d="M11 0h9l-4.500 6z" fill={gray} /></svg>
          {sideTool("全屏", <path d="M1.500 11V1.500h9M20 1.500h9V11M1.500 19v9.500h9M20 28.500h9V19" />)}
          {sideTool("选择", <><rect x="1.500" y="1.500" width="28" height="27" rx="2" strokeDasharray="3 2" /><path stroke={blue} strokeWidth="2" d="M15.500 6.500l8 4.500v9l-8 4.500-8-4.500v-9zM7.500 11l8 4.500 8-4.500M15.500 15.500v8" /></>)}
          <SideView>
            {sideTool("显示设置", <><path d="M29 16V3q0-1.500-1.500-1.500H3Q1.500 1.500 1.500 3v24q0 1.500 1.500 1.500h12M7 9h3M12 9h12M7 15h3M12 15h6M7 21h4" /><ellipse cx="24" cy="24" rx="6" ry="4.500" stroke={blue} /><circle cx="24" cy="24" r="1.500" stroke={blue} /></>)}
          </SideView>
        </SideTools>
        <svg width="39" height="395" viewBox="0 0 39 395" fill="none" stroke="#008a00" strokeWidth="1.300">
          <polygon points={ring(30, -7)} />
          <polygon points={ring(30, 53)} />
          <polygon points={ring(30, 235)} />
          <polygon points={ring(28, 279)} />
          <path d="M13 53h11M0 235h22M0 279h22" />
          <g fill="#e8e8e8" stroke="none" fontFamily="Noto Sans, sans-serif" fontSize="26">
            <text x="30" y="2" textAnchor="middle">C</text>
            <text x="30" y="62" textAnchor="middle">B</text>
            <text x="30" y="244" textAnchor="middle">A</text>
            <text x="7" y="288">123</text>
            <text transform="translate(10 59) rotate(-90)" x="0" y="0">1400</text>
          </g>
        </svg>
      </Side>
    </Page>
  );
}
